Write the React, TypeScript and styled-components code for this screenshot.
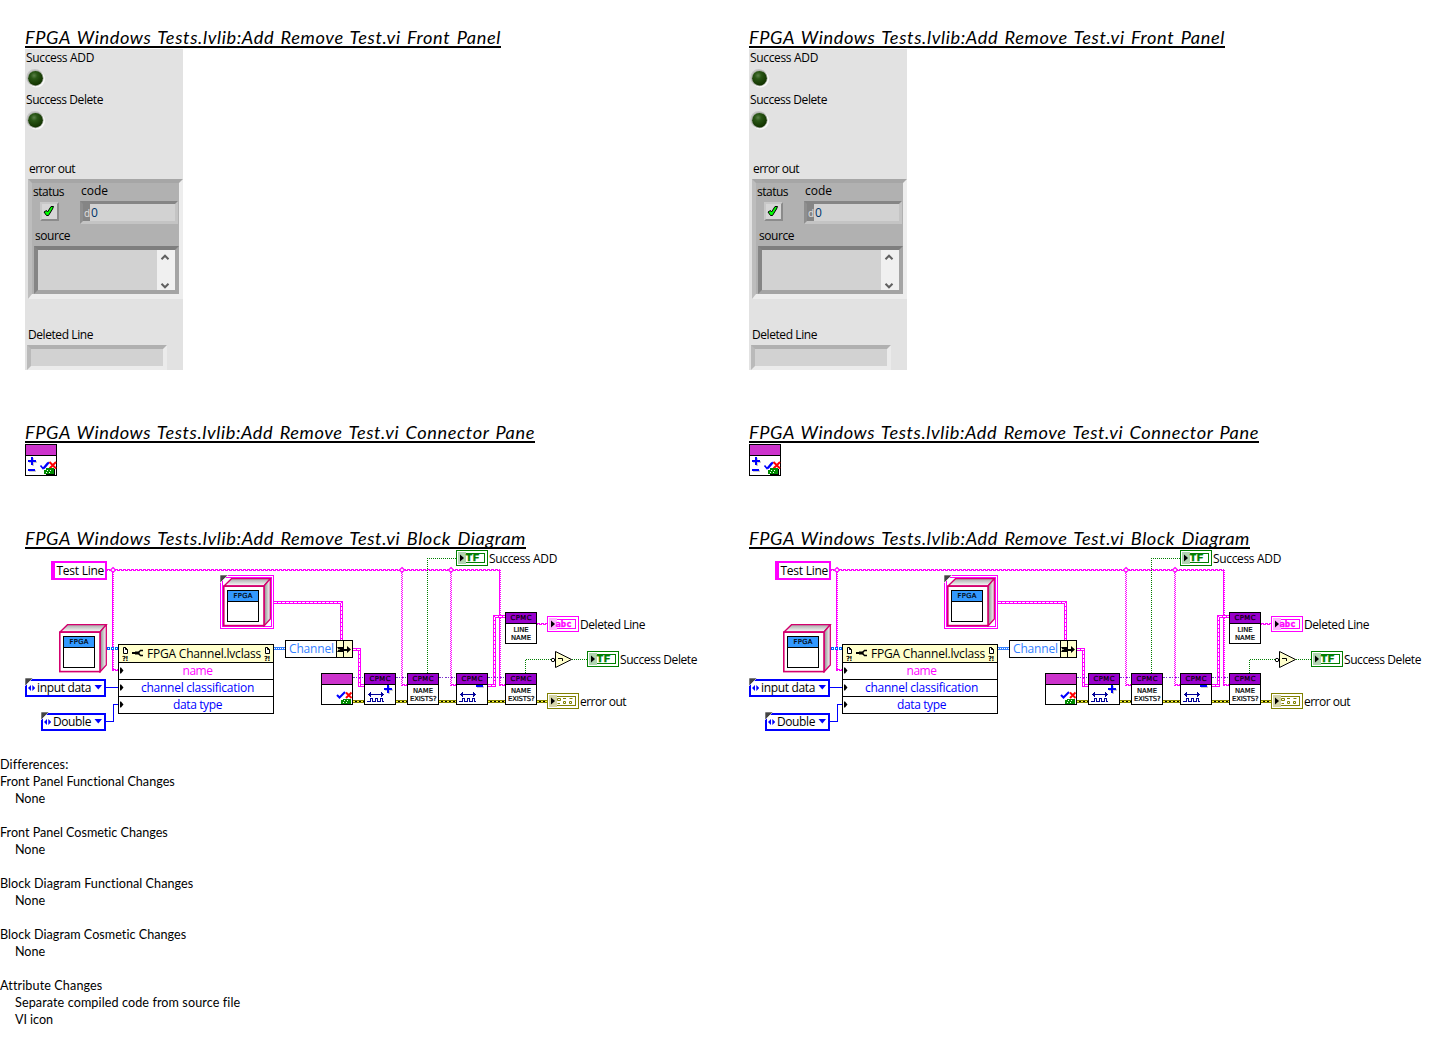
import React, { useLayoutEffect, useRef, useState } from "react";
import styled, { createGlobalStyle } from "styled-components";

const GlobalStyle = createGlobalStyle`
  body {
    margin: 0;
    background: #fff;
    color: #000;
    font-family: "Open Sans", "Noto Sans", sans-serif;
    font-size: 12px;
  }
`;

const UI_FONT = '"Open Sans", "Noto Sans", sans-serif';

/* ---------- text ---------- */

const TrackedText = styled.span`
  display: inline-block;
  white-space: pre;
`;

/* Spreads the letters of a line so that it fills the given width. */
function Fit({ width, children }: { width: number; children: string }) {
  const ref = useRef<HTMLSpanElement>(null);
  const [tracking, setTracking] = useState(0);
  useLayoutEffect(() => {
    if (ref.current) {
      const natural = ref.current.getBoundingClientRect().width;
      setTracking((width - natural) / children.length);
    }
  }, [width, children]);
  return (
    <TrackedText ref={ref} style={{ letterSpacing: `${tracking}px` }}>
      {children}
    </TrackedText>
  );
}

/* ---------- page ---------- */

const Page = styled.main`
  width: 1448px;
  height: 1062px;
  overflow: hidden;
`;

const Columns = styled.div`
  display: grid;
  grid-template-columns: 724px 724px;
`;

const Column = styled.section`
  display: flex;
  flex-direction: column;
  align-items: flex-start;
  padding: 26px 0 0 25px;
`;

const Heading = styled.h2<{ $gap?: number }>`
  margin: ${(p) => p.$gap ?? 0}px 0 0;
  height: 20px;
  border-bottom: 2px solid #000;
  font: italic 400 18.2px/22px Lato, sans-serif;
  word-spacing: 1.5px;
`;

/* ---------- front panel ---------- */

const Panel = styled.div`
  display: flex;
  flex-direction: column;
  align-items: flex-start;
  width: 158px;
  height: 321px;
  margin-top: 1px;
  background: #e2e2e2;
`;

const Label = styled.div<{ $top?: number; $left?: number }>`
  height: 16px;
  margin: ${(p) => p.$top ?? 0}px 0 0 ${(p) => p.$left ?? 1}px;
  font: 12px/16px ${UI_FONT};
`;

const LedSvg = styled.svg`
  display: block;
  margin: 2px 0 0 0;
`;

const Cluster = styled.div`
  display: grid;
  grid-template-columns: 48px 99px;
  grid-template-rows: 43px 68px;
  box-sizing: border-box;
  width: 155px;
  height: 120px;
  margin: 2px 0 0 3px;
  border: 4px solid;
  border-color: #a6a6a6 #ededed #ededed #bdbdbd;
  border-bottom-width: 5px;
  background: #b1b1b1;
`;

const Cell = styled.div<{ $wide?: boolean }>`
  display: flex;
  flex-direction: column;
  align-items: flex-start;
  grid-column: ${(p) => (p.$wide ? "1 / 3" : "auto")};
`;

const CheckBox = styled.div`
  box-sizing: border-box;
  width: 19px;
  height: 19px;
  margin: 2px 0 0 8px;
  border: 2px solid;
  border-color: #c8c8c8 #8b8b8b #8b8b8b #c8c8c8;
  background: #d6d6d6;
`;

const CodeField = styled.div`
  display: flex;
  box-sizing: border-box;
  width: 98px;
  height: 23px;
  margin: 2px 0 0 0;
  border: 3px solid;
  border-color: #858585 #c4c4c4 #c4c4c4 #8f8f8f;
  background: #d2d2d2;
  color: #003468;
  font: 12px/18px ${UI_FONT};
`;

const Radix = styled.span`
  width: 7px;
  margin-right: 1px;
  background: #858585;
  color: #e0e0e0;
  font-size: 10px;
  text-align: right;
`;

const SourceField = styled.div`
  display: flex;
  justify-content: flex-end;
  box-sizing: border-box;
  width: 145px;
  height: 48px;
  margin: 2px 0 0 2px;
  border: 4px solid;
  border-color: #7e7e7e #a4a4a4 #a4a4a4 #858585;
  background: #d2d2d2;
`;

const ScrollBar = styled.div`
  display: flex;
  flex-direction: column;
  justify-content: space-between;
  align-items: center;
  box-sizing: border-box;
  width: 18px;
  padding: 3px 2px 0 0;
  background: #f0f0f0;
`;

const StringField = styled.div`
  box-sizing: border-box;
  width: 140px;
  height: 25px;
  margin: 2px 0 0 2px;
  border: 4px solid;
  border-color: #b0b0b0 #ebebeb #ebebeb #bababa;
  background: #d2d2d2;
`;

function Led({ id }: { id: string }) {
  return (
    <LedSvg width="22" height="20" viewBox="0 0 22 20">
      <defs>
        <radialGradient id={id} cx="40%" cy="32%" r="65%">
          <stop offset="0" stopColor="#5a8048" />
          <stop offset="0.35" stopColor="#2a5716" />
          <stop offset="1" stopColor="#123400" />
        </radialGradient>
      </defs>
      <circle cx="11.4" cy="11" r="8.6" fill="#f8f8f8" />
      <circle cx="9.8" cy="9.4" r="8.5" fill="#c6c6c6" />
      <circle cx="10.5" cy="10.2" r="8" fill="#a4aaa0" />
      <circle cx="10.5" cy="10.2" r="7.3" fill={`url(#${id})`} />
    </LedSvg>
  );
}

function Chevron({ down }: { down?: boolean }) {
  return (
    <svg width="10" height="8" viewBox="0 0 10 8">
      <path
        d={down ? "M1.5 1.8 5 5.3 8.5 1.8" : "M1.5 6.2 5 2.7 8.5 6.2"}
        fill="none"
        stroke="#606060"
        strokeWidth="2"
      />
    </svg>
  );
}

function FrontPanel({ side }: { side: string }) {
  return (
    <Panel>
      <Label $top={1}>
        <Fit width={68}>Success ADD</Fit>
      </Label>
      <Led id={`led-add-${side}`} />
      <Label $top={4}>
        <Fit width={77}>Success Delete</Fit>
      </Label>
      <Led id={`led-delete-${side}`} />
      <Label $top={31} $left={4}>
        <Fit width={46}>error out</Fit>
      </Label>
      <Cluster>
        <Cell>
          <Label $left={1} $top={1}>
            <Fit width={31}>status</Fit>
          </Label>
          <CheckBox>
            <svg width="15" height="15" viewBox="0 0 15 15">
              <path
                d="M2 8 4.5 6.5 5.5 8 9 2.5H11.5L10.5 5 6.5 11.5H4.5Z"
                fill="#00ff00"
                stroke="#000"
                strokeWidth="1"
              />
            </svg>
          </CheckBox>
        </Cell>
        <Cell>
          <Label $left={1}>
            <Fit width={27}>code</Fit>
          </Label>
          <CodeField>
            <Radix>d</Radix>0
          </CodeField>
        </Cell>
        <Cell $wide>
          <Label $left={3} $top={2}>
            <Fit width={35}>source</Fit>
          </Label>
          <SourceField>
            <ScrollBar>
              <Chevron />
              <Chevron down />
            </ScrollBar>
          </SourceField>
        </Cell>
      </Cluster>
      <Label $top={28} $left={3}>
        <Fit width={65}>Deleted Line</Fit>
      </Label>
      <StringField />
    </Panel>
  );
}

/* ---------- VI icons ---------- */

const IconSvg = styled.svg`
  display: block;
  flex: none;
`;

function PixelText(props: {
  x: number;
  y: number;
  width: number;
  children: string;
}) {
  return (
    <text
      x={props.x}
      y={props.y}
      textLength={props.width}
      lengthAdjust="spacing"
      fill="#000"
      fontFamily='"DejaVu Sans", sans-serif'
      fontSize="6.8"
      stroke="#000"
      strokeWidth="0.2"
    >
      {props.children}
    </text>
  );
}

function CheckCross() {
  return (
    <>
      <path d="M16 22 18.5 24.5 24 19" fill="none" stroke="#00f" strokeWidth="2" />
      <path d="M25 19.5 30.5 25M30.5 19.5 25 25" stroke="#f00" strokeWidth="2" />
    </>
  );
}

function ConnectorIcon() {
  return (
    <IconSvg width="32" height="32" viewBox="0 0 32 32">
      <rect x="0.5" y="0.5" width="31" height="31" fill="#fff" stroke="#000" />
      <path d="M1 1H31V11H1Z" fill="#cc33cc" />
      <path d="M0 11.5H32" stroke="#000" />
      <path d="M4 18H12M8 14V22M4 27H11" stroke="#ccc" strokeWidth="2" />
      <path d="M3 17H11M7 13V21M3 26H10" stroke="#00f" strokeWidth="2" />
      <path d="M15.5 21.5 18 24.5 23 18.5M19 24.5 24.5 18" fill="none" stroke="#00f" strokeWidth="1.6" />
      <path d="M24.5 18 31 24.5M31 18 24.5 24.5" stroke="#f00" strokeWidth="2" />
      <path d="M21 25H30V31H21Z" fill="#000" />
      <path d="M19 26H21V24H29V30H19Z" fill="#008c00" />
      <path d="M22 26h1v1h-1zM25 26h1v1h-1zM21 28h1v1h-1zM24 28h1v1h-1z" fill="#fff" />
    </IconSvg>
  );
}

type BlockKind = "test" | "add" | "remove" | "exists" | "line";

function BlockIcon({ kind }: { kind: BlockKind }) {
  return (
    <IconSvg width="32" height="32" viewBox="0 0 32 32">
      <rect x="0.5" y="0.5" width="31" height="31" fill="#fff" stroke="#000" />
      <path d="M1 1H31V11H1Z" fill={kind === "test" ? "#cc33cc" : "#9900cc"} />
      <path d="M0 11.5H32" stroke="#000" />
      {kind !== "test" && (
        <PixelText x={5.5} y={8} width={21}>
          CPMC
        </PixelText>
      )}
      {kind === "test" && (
        <>
          <CheckCross />
          <path d="M20 27H22V26H30V31H20Z" fill="#008c00" />
          <path d="M23 27h1v1h-1zM26 27h1v1h-1zM22 29h1v1h-1zM25 29h1v1h-1z" fill="#fff" />
        </>
      )}
      {(kind === "add" || kind === "remove") && (
        <g shapeRendering="crispEdges">
          <path d="M5 21.5H19" stroke="#000099" />
          <path d="M4 21h1v1h-1zM5 20h1v3h-1zM6 19h1v5h-1zM17 19h1v5h-1zM18 20h1v3h-1zM19 21h1v1h-1z" fill="#000099" />
          <path
            d="M3 28.5H6.5V25.5H8.5V28.5H11.5V25.5H13.5V28.5H16.5V25.5H18.5V28.5H20"
            fill="none"
            stroke="#000099"
          />
        </g>
      )}
      {kind === "add" && (
        <>
          <path d="M21 17H29M25 13V21" stroke="#ccc" strokeWidth="2" />
          <path d="M20 16H28M24 12V20" stroke="#00f" strokeWidth="2" />
        </>
      )}
      {kind === "remove" && (
        <>
          <path d="M21 14H28" stroke="#ccc" strokeWidth="2" />
          <path d="M20 13H27" stroke="#00f" strokeWidth="2" />
        </>
      )}
      {kind === "exists" && (
        <>
          <PixelText x={6} y={20} width={20}>
            NAME
          </PixelText>
          <PixelText x={3} y={28} width={26.5}>
            EXISTS?
          </PixelText>
        </>
      )}
      {kind === "line" && (
        <>
          <PixelText x={8.5} y={20} width={15}>
            LINE
          </PixelText>
          <PixelText x={6} y={28} width={20}>
            NAME
          </PixelText>
        </>
      )}
    </IconSvg>
  );
}

/* ---------- block diagram ---------- */

const Canvas = styled.div`
  position: relative;
  width: 699px;
  height: 190px;
`;

const WireLayer = styled.svg`
  position: absolute;
  inset: 0;
`;

/* Diagram coordinates start at the corner of the column. */
const Node = styled.div<{ $x: number; $y: number }>`
  position: absolute;
  display: flex;
  left: ${(p) => p.$x - 25}px;
  top: ${(p) => p.$y - 549}px;
`;

const StringConstant = styled.div`
  box-sizing: border-box;
  width: 56px;
  height: 19px;
  padding-left: 1.5px;
  border: 2px solid #f0f;
  border-left-width: 4px;
  background: #fff;
  font: 12px/16px ${UI_FONT};
`;

const EnumConstant = styled.div<{ $width: number }>`
  display: flex;
  align-items: center;
  gap: 2px;
  box-sizing: border-box;
  width: ${(p) => p.$width}px;
  height: 18px;
  padding: 0 1px;
  border: 2px solid #00f;
  background: #fff;
  font: 12px/14px ${UI_FONT};

  & > svg:last-child {
    margin-left: auto;
  }
`;

const PropertyNode = styled.div`
  box-sizing: border-box;
  width: 156px;
  height: 70px;
  border: 1px solid #000;
  background: #fff;
`;

const PropertyHeader = styled.div`
  display: flex;
  justify-content: space-between;
  height: 17px;
  padding: 0 2px 0 3px;
  background: #ffffcc;
  font: 12px/17px ${UI_FONT};
`;

const PropertyRow = styled.div<{ $color: string }>`
  display: grid;
  grid-template-columns: 6px 1fr 3px;
  align-items: center;
  justify-items: center;
  height: 16px;
  border-top: 1px solid #000;
  color: ${(p) => p.$color};
  font: 12px/16px ${UI_FONT};
`;

const BundleNode = styled.div`
  display: flex;
  box-sizing: border-box;
  width: 68px;
  height: 18px;
  border: 1px solid #000;
  background: #fff;
  color: #3380ff;
  font: 12px/16px ${UI_FONT};
`;

const BundleText = styled.div`
  width: 50px;
  padding-left: 3px;
  box-sizing: border-box;
`;

const NodeLabel = styled.div`
  height: 16px;
  font: 12px/16px ${UI_FONT};
`;

function CornerMark() {
  return (
    <IconSvg width="9" height="9">
      <path d="M0 0H8L0 8Z" fill="#444" stroke="#fff" strokeWidth="0.6" />
    </IconSvg>
  );
}

function Enum({ x, y, width, text, textWidth }: { x: number; y: number; width: number; text: string; textWidth: number }) {
  return (
    <>
      <Node $x={x} $y={y}>
        <EnumConstant $width={width}>
          <IconSvg width="7" height="6" viewBox="0 0 7 6">
            <path d="M3 0V6L0 3ZM4.3 0V6L7.3 3Z" fill="#00f" />
          </IconSvg>
          <Fit width={textWidth}>{text}</Fit>
          <IconSvg width="9" height="6">
            <path d="M0.5 0H8L4.3 4.5Z" fill="#00f" />
          </IconSvg>
        </EnumConstant>
      </Node>
      <Node $x={x} $y={y - 1}>
        <CornerMark />
      </Node>
    </>
  );
}

function ClassCube({ id }: { id: string }) {
  return (
    <IconSvg width="49" height="49" viewBox="0 0 49 49">
      <defs>
        <linearGradient id={`${id}-side`} x1="0" x2="1" y1="0" y2="0">
          <stop offset="0" stopColor="#8a8a8a" />
          <stop offset="1" stopColor="#fff" />
        </linearGradient>
        <linearGradient id={`${id}-top`} x1="0" x2="0" y1="1" y2="0">
          <stop offset="0" stopColor="#fff" />
          <stop offset="1" stopColor="#a8a8a8" />
        </linearGradient>
      </defs>
      <path d="M1 8 8.5 0.7H47.3L41 8Z" fill={`url(#${id}-top)`} stroke="#d4006e" strokeWidth="1.3" />
      <path d="M41 8 47.3 0.7V41L41 48Z" fill={`url(#${id}-side)`} stroke="#d4006e" strokeWidth="1.3" />
      <rect x="0.8" y="8.2" width="40.2" height="39.4" fill="#fff" stroke="#d4006e" strokeWidth="1.6" />
      <rect x="4.5" y="12.5" width="31" height="31" fill="#fff" stroke="#000" />
      <path d="M5 13H35V23H5Z" fill="#3399ff" />
      <path d="M4 23.5H36" stroke="#000" />
      <PixelText x={10.5} y={20} width={19}>
        FPGA
      </PixelText>
    </IconSvg>
  );
}

function DocMark() {
  return (
    <svg width="7" height="17" viewBox="0 0 7 17">
      <path d="M1.5 2.5H3.5L5.5 4.5V8.5H1.5ZM3.5 2.5V4.5H5.5" fill="#fff" stroke="#000" />
      <text x="0" y="15.5" textLength="6.5" fontSize="7" fontWeight="700" fontFamily='"DejaVu Sans", sans-serif'>
        ?!
      </text>
    </svg>
  );
}

function InputArrow() {
  return (
    <IconSvg width="6" height="8">
      <path d="M1 0.5H2L4.5 3.5 2 6.5H1Z" fill="#000" />
    </IconSvg>
  );
}

type TerminalKind = "bool" | "string" | "error";

const TERMINAL = {
  bool: { color: "#007f00", tint: "#b0d4b0" },
  string: { color: "#ff00ff", tint: "#ffb3ff" },
  error: { color: "#808000", tint: "#d4d4a8" },
};

function Terminal({ kind }: { kind: TerminalKind }) {
  const { color, tint } = TERMINAL[kind];
  return (
    <IconSvg width="32" height="16" viewBox="0 0 32 16">
      <rect x="0.5" y="0.5" width="31" height="15" fill="#fff" stroke={color} />
      <rect x="3.5" y="3.5" width="25" height="9" fill="#fff" stroke={color} />
      <rect x="2" y="2" width="8" height="12" fill={tint} />
      {kind === "error" ? (
        <path
          d="M10.5 5.5H13.5V7.5H10.5ZM16 5.5H19M22.5 5.5H25.5M10.5 10.5H13M16.5 8.5H18.5V10.5H16.5ZM22.5 8.5H24.5V10.5H22.5Z"
          fill="none"
          stroke={color}
        />
      ) : (
        <text
          x={kind === "bool" ? 9.5 : 8.5}
          y="11"
          textLength={kind === "bool" ? 14 : 16}
          lengthAdjust="spacingAndGlyphs"
          fontFamily='"DejaVu Sans Mono", monospace'
          fontWeight="700"
          fontSize="8"
          fill={color}
          stroke={color}
          strokeWidth="0.3"
        >
          {kind === "bool" ? "TF" : "abc"}
        </text>
      )}
      <path d="M4 4.5 8 8 4 11.5Z" fill="#000" />
    </IconSvg>
  );
}

/* A string wire runs along one pixel row and is serrated along the next one. */
function StringWire({ d }: { d: string }) {
  return (
    <g fill="none" stroke="#f0f" shapeRendering="crispEdges">
      <path d={d} strokeDasharray="3 1" />
      <path d={d} strokeDasharray="3 1" strokeDashoffset="2" transform="translate(0 1)" />
    </g>
  );
}

/* The vertical run of a string wire; a light one is dotted in both columns. */
function StringRiser({ d, light }: { d: string; light?: boolean }) {
  return (
    <g fill="none" stroke="#f0f" shapeRendering="crispEdges">
      <path d={d} strokeDasharray={light ? "1 1" : undefined} strokeDashoffset={light ? 1 : 0} />
      <path d={d} strokeDasharray="1 1" transform="translate(1 0)" />
    </g>
  );
}

function ObjectWire({ d }: { d: string }) {
  return (
    <g fill="none" shapeRendering="crispEdges">
      <path d={d} stroke="#f0f" strokeWidth="3" />
      <path d={d} stroke="#fff" strokeDasharray="3 1" />
    </g>
  );
}

function ErrorWire({ d }: { d: string }) {
  return (
    <g fill="none" shapeRendering="crispEdges">
      <path d={d} stroke="#808000" strokeWidth="3" />
      <path d={d} stroke="#000" />
      <path d={d} stroke="#ffff33" strokeDasharray="2 2" />
    </g>
  );
}

function Wires() {
  return (
    <WireLayer width="699" height="190" viewBox="25 549 699 190">
      <StringWire d="M107 569.5H500" />
      <StringRiser d="M112.5 570V671" />
      <StringWire d="M113 669.5H118" />
      <StringRiser light d="M401.5 570V686" />
      <StringWire d="M402 684.5H407" />
      <StringRiser light d="M450.5 570V686" />
      <StringWire d="M451 684.5H456" />
      <StringRiser d="M499.5 570V686" />
      <StringWire d="M500 684.5H505" />
      <StringWire d="M537 623.5H547" />
      <g fill="#fff" stroke="#f0f" strokeWidth="1.2">
        <path d="M113 567.5 115.5 570 113 572.5 110.5 570Z" />
        <path d="M402 567.5 404.5 570 402 572.5 399.5 570Z" />
        <path d="M451 567.5 453.5 570 451 572.5 448.5 570Z" />
      </g>
      <ObjectWire d="M274 602.5H341.5V640" />
      <ObjectWire d="M353 649.5H359.5V685.5H364" />
      <ObjectWire d="M488 685.5H494.5V616.5H505" />
      <g fill="none" shapeRendering="crispEdges">
        <path d="M107 648.5H118" stroke="#0066ff" strokeWidth="3" strokeDasharray="3 1" />
        <path d="M108 648.5H118" stroke="#fff" strokeDasharray="1 3" />
        <path d="M274 648.5H285" stroke="#3380ff" strokeWidth="3" />
        <path d="M274 648.5H285" stroke="#fff" strokeDasharray="1 1" />
        <path d="M106 687.5H118M106 721.5H113.5V704.5H118" stroke="#00f" />
        <path d="M353 677.5H364M396 677.5H407M439 677.5H456M488 677.5H505" stroke="#7a33cc" strokeDasharray="2 1 1 2" />
        <path d="M427.5 673V558.5H456M525.5 673V659.5H551M572 659.5H587" stroke="#007f00" strokeDasharray="1 1" />
      </g>
      <ErrorWire d="M353 701.5H364" />
      <ErrorWire d="M396 701.5H407" />
      <ErrorWire d="M439 701.5H456" />
      <ErrorWire d="M488 701.5H505" />
      <ErrorWire d="M537 701.5H547" />
      <path d="M555.5 651.5V667.5L571.5 659.5Z" fill="#ffffcc" stroke="#000" />
      <circle cx="553" cy="660" r="1.7" fill="#fff" stroke="#000" />
      <path d="M558 658.5H562.5V661" fill="none" stroke="#000" />
    </WireLayer>
  );
}

const BLOCKS: { kind: BlockKind; x: number; y: number }[] = [
  { kind: "test", x: 321, y: 673 },
  { kind: "add", x: 364, y: 673 },
  { kind: "exists", x: 407, y: 673 },
  { kind: "remove", x: 456, y: 673 },
  { kind: "exists", x: 505, y: 673 },
  { kind: "line", x: 505, y: 612 },
];

const TERMINALS: { kind: TerminalKind; x: number; y: number; text: string; width: number; tx: number }[] = [
  { kind: "bool", x: 456, y: 550, text: "Success ADD", width: 68, tx: 489 },
  { kind: "string", x: 547, y: 616, text: "Deleted Line", width: 65, tx: 580 },
  { kind: "bool", x: 587, y: 651, text: "Success Delete", width: 77, tx: 620 },
  { kind: "error", x: 547, y: 693, text: "error out", width: 46, tx: 580 },
];

function BlockDiagram({ side }: { side: string }) {
  return (
    <Canvas>
      <Wires />
      <Node $x={51} $y={561}>
        <StringConstant>
          <Fit width={47.5}>Test Line</Fit>
        </StringConstant>
      </Node>
      <Node $x={59} $y={624}>
        <ClassCube id={`cube-a-${side}`} />
      </Node>
      <Node $x={220} $y={575}>
        <IconSvg width="54" height="54">
          <rect x="0.5" y="0.5" width="53" height="53" fill="#fff" stroke="#f0f" />
          <rect x="2.5" y="2.5" width="49" height="49" fill="#fff" stroke="#f0f" />
        </IconSvg>
      </Node>
      <Node $x={223} $y={578}>
        <ClassCube id={`cube-b-${side}`} />
      </Node>
      <Node $x={220} $y={575}>
        <CornerMark />
      </Node>
      <Enum x={25} y={679} width={81} text="input data" textWidth={54} />
      <Enum x={41} y={713} width={65} text="Double" textWidth={38} />
      <Node $x={118} $y={644}>
        <PropertyNode>
          <PropertyHeader>
            <DocMark />
            <svg width="12" height="17" viewBox="0 0 12 17">
              <path d="M0 7H3V6.5H7V9.5H3V9H0Z" fill="#000" />
              <path d="M11 5.5H8.5L7 7V9L8.5 10.5H11" fill="none" stroke="#000" strokeWidth="1.4" />
            </svg>
            <Fit width={114}>FPGA Channel.lvclass</Fit>
            <DocMark />
          </PropertyHeader>
          <PropertyRow $color="#f0f">
            <InputArrow />
            <Fit width={30}>name</Fit>
          </PropertyRow>
          <PropertyRow $color="#00f">
            <InputArrow />
            <Fit width={113}>channel classification</Fit>
          </PropertyRow>
          <PropertyRow $color="#00f">
            <InputArrow />
            <Fit width={49}>data type</Fit>
          </PropertyRow>
        </PropertyNode>
      </Node>
      <Node $x={285} $y={640}>
        <BundleNode>
          <BundleText>
            <Fit width={45}>Channel</Fit>
          </BundleText>
          <IconSvg width="16" height="16">
            <path d="M0 0H16V16H0Z" fill="#ffffcc" />
            <path d="M0.5 0V16M7.5 0V16" stroke="#000" />
            <path d="M1 6H7V11H1L2.5 8.5ZM7 8H11V5L15 8.5 11 12V10H7Z" fill="#000" />
            <path d="M2.5 8H3.5V9H2.5Z" fill="#ffffcc" />
          </IconSvg>
        </BundleNode>
      </Node>
      {BLOCKS.map((b) => (
        <Node key={`${b.x}-${b.y}`} $x={b.x} $y={b.y}>
          <BlockIcon kind={b.kind} />
        </Node>
      ))}
      {TERMINALS.map((t) => (
        <React.Fragment key={t.text}>
          <Node $x={t.x} $y={t.y}>
            <Terminal kind={t.kind} />
          </Node>
          <Node $x={t.tx} $y={t.y + 1}>
            <NodeLabel>
              <Fit width={t.width}>{t.text}</Fit>
            </NodeLabel>
          </Node>
        </React.Fragment>
      ))}
    </Canvas>
  );
}

/* ---------- differences ---------- */

const Report = styled.section`
  margin-top: 17px;
  font: 12.6px/17px Lato, sans-serif;
`;

const ReportGroup = styled.div`
  margin-bottom: 17px;
`;

const ReportLine = styled.div<{ $indent?: boolean }>`
  height: 17px;
  padding-left: ${(p) => (p.$indent ? 15 : 0)}px;
`;

type Line = [text: string, width: number];

const GROUPS: { title: Line; items: Line[] }[] = [
  { title: ["Front Panel Functional Changes", 175], items: [["None", 30]] },
  { title: ["Front Panel Cosmetic Changes", 168], items: [["None", 30]] },
  { title: ["Block Diagram Functional Changes", 193.5], items: [["None", 30]] },
  { title: ["Block Diagram Cosmetic Changes", 186.5], items: [["None", 30]] },
  {
    title: ["Attribute Changes", 102],
    items: [
      ["Separate compiled code from source file", 225],
      ["VI icon", 38],
    ],
  },
];

const VI = "FPGA Windows Tests.lvlib:Add Remove Test.vi";

const ConnectorBox = styled.div`
  height: 32px;
  margin-top: 1px;
`;

function Version({ side }: { side: string }) {
  return (
    <Column>
      <Heading>
        <Fit width={476}>{`${VI} Front Panel`}</Fit>
      </Heading>
      <FrontPanel side={side} />
      <Heading $gap={51}>
        <Fit width={510}>{`${VI} Connector Pane`}</Fit>
      </Heading>
      <ConnectorBox>
        <ConnectorIcon />
      </ConnectorBox>
      <Heading $gap={51}>
        <Fit width={501}>{`${VI} Block Diagram`}</Fit>
      </Heading>
      <BlockDiagram side={side} />
    </Column>
  );
}

export default function App() {
  return (
    <Page>
      <GlobalStyle />
      <Columns>
        <Version side="left" />
        <Version side="right" />
      </Columns>
      <Report>
        <ReportLine>
          <Fit width={68}>Differences:</Fit>
        </ReportLine>
        {GROUPS.map((g) => (
          <ReportGroup key={g.title[0]}>
            <ReportLine>
              <Fit width={g.title[1]}>{g.title[0]}</Fit>
            </ReportLine>
            {g.items.map(([text, width]) => (
              <ReportLine key={text} $indent>
                <Fit width={width}>{text}</Fit>
              </ReportLine>
            ))}
          </ReportGroup>
        ))}
      </Report>
    </Page>
  );
}
